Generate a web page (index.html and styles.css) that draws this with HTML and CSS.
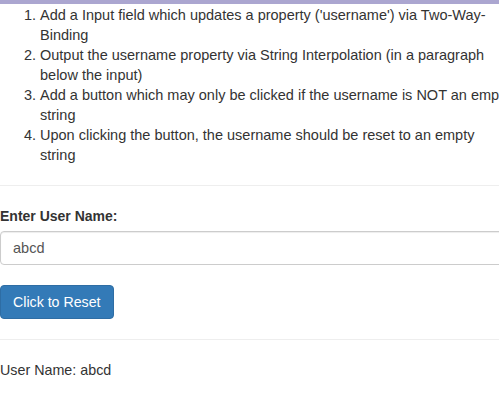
FILE: index.html
```html
<!DOCTYPE html>
<html>
<head>
<meta charset="utf-8">
<link rel="stylesheet" href="styles.css">
</head>
<body>
<div class="viewport">
  <div class="topbar"></div>
  <div class="content">
    <ol class="tasks">
      <li>Add a Input field which updates a property ('username') via Two-Way-Binding</li>
      <li>Output the username property via String Interpolation (in a paragraph below the input)</li>
      <li>Add a button which may only be clicked if the username is NOT an empty string</li>
      <li>Upon clicking the button, the username should be reset to an empty string</li>
    </ol>
    <hr class="divider">
    <div class="form-group">
      <label class="label">Enter User Name:</label>
      <input class="form-control" type="text" value="abcd">
    </div>
    <button class="btn">Click to Reset</button>
    <hr class="divider">
    <p class="output">User Name: abcd</p>
  </div>
</div>
</body>
</html>
```

FILE: styles.css
```css
html, body {
  margin: 0;
  padding: 0;
  background: #fff;
  overflow: hidden;
}
.viewport {
  width: 499px;
  height: 405px;
  overflow: hidden;
  font-family: "Liberation Sans", Arial, sans-serif;
  font-size: 14px;
  line-height: 20px;
  color: #333;
}
.topbar {
  height: 4px;
  background: #aba6d0;
}
.content {
  width: 513px;
  padding-top: 1px;
}
.tasks {
  margin: 0 0 20px 0;
  padding-left: 40px;
  font-size: 14.5px;
}
.divider {
  margin: 0;
  border: 0;
  border-top: 1px solid #eee;
  height: 0;
}
.form-group {
  margin-top: 20px;
  display: flex;
  flex-direction: column;
}
.label {
  font-weight: bold;
  margin-bottom: 5px;
}
.form-control {
  box-sizing: border-box;
  width: 520px;
  height: 34px;
  padding: 6px 12px;
  font-family: inherit;
  font-size: 14.5px;
  line-height: 20px;
  color: #555;
  border: 1px solid #ccc;
  border-radius: 4px;
  box-shadow: inset 0 1px 1px rgba(0,0,0,.075);
  margin: 0;
}
.btn {
  display: block;
  margin: 20px 0 20px 0;
  height: 34px;
  padding: 6px 12px;
  font-family: inherit;
  font-size: 14.2px;
  line-height: 20px;
  color: #fff;
  background: #337ab7;
  border: 1px solid #2e6da4;
  border-radius: 4px;
}
.output {
  margin: 20px 0 0 0;
  font-size: 14.3px;
}
```
